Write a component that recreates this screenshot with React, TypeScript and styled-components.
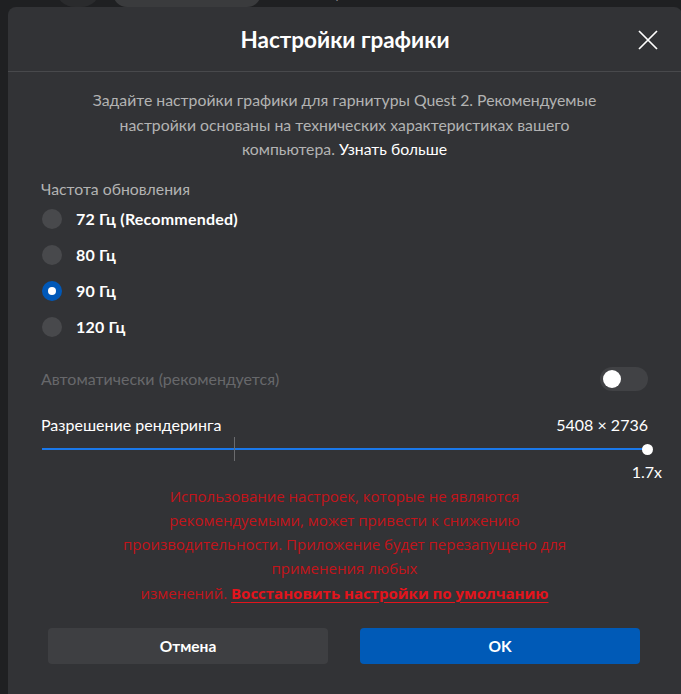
import React from "react";
import styled, { createGlobalStyle } from "styled-components";

const Global = createGlobalStyle`
  html, body { margin: 0; padding: 0; background: #1f2022; overflow: hidden; }
  body { font-family: "Segoe UI", "Lato", "Noto Sans", sans-serif; }
  * { box-sizing: border-box; }
`;

const Page = styled.div`
  width: 681px;
  height: 694px;
  overflow: hidden;
  background: #1f2022;
`;

const PeekStrip = styled.div`
  height: 7px;
  display: flex;
  align-items: flex-end;
  overflow: hidden;
  padding-left: 55px;
  gap: 12px;
`;

const PeekCircle = styled.div`
  width: 46px;
  height: 40px;
  border-radius: 0 0 20px 20px;
  background: #2a2b2d;
`;

const PeekCard = styled.div`
  width: 148px;
  height: 30px;
  border-radius: 0 0 14px 14px;
  background: #3a3b3d;
`;

const PeekText = styled.div`
  margin-left: 28px;
  font-size: 13px;
  line-height: 13px;
  color: #8a8a8a;
  transform: translateY(-6px);
`;

const Modal = styled.div`
  margin-left: 8px;
  width: 674px;
  height: 700px;
  background: #323336;
  border-radius: 8px;
  display: flex;
  flex-direction: column;
`;

const Header = styled.div`
  height: 65px;
  border-bottom: 1px solid #48494c;
  display: flex;
  align-items: center;
  justify-content: center;
  position: relative;
`;

const Title = styled.h1`
  margin: 0;
  font-size: 22.5px;
  font-weight: 700;
  color: #ffffff;
`;

const CloseButton = styled.button`
  position: absolute;
  right: 22px;
  top: 21px;
  width: 24px;
  height: 24px;
  padding: 0;
  border: none;
  background: transparent;
  display: flex;
  align-items: center;
  justify-content: center;
  cursor: pointer;
`;

const Body = styled.div`
  padding: 0 34px 0 33px;
  display: flex;
  flex-direction: column;
`;

const Description = styled.p`
  margin: 16px 0 0;
  text-align: center;
  font-size: 15.8px;
  line-height: 24.5px;
  color: #b3b3b3;
`;

const LearnMore = styled.a`
  color: #ffffff;
  text-decoration: none;
`;

const SectionLabel = styled.div`
  margin-top: 17px;
  font-size: 15.8px;
  line-height: 20px;
  color: #b3b3b3;
`;

const RadioList = styled.div`
  margin-top: 2px;
  display: flex;
  flex-direction: column;
`;

const RadioRow = styled.label`
  height: 36px;
  display: flex;
  align-items: center;
  gap: 14px;
  cursor: pointer;
`;

const RadioDot = styled.span<{ $checked: boolean }>`
  width: 20px;
  height: 20px;
  margin-left: 1px;
  border-radius: 50%;
  background: ${(p) => (p.$checked ? "#0058b8" : "#48494c")};
  display: flex;
  align-items: center;
  justify-content: center;
  &::after {
    content: "";
    width: 8px;
    height: 8px;
    border-radius: 50%;
    background: #ffffff;
    display: ${(p) => (p.$checked ? "block" : "none")};
  }
`;

const RadioText = styled.span`
  font-size: 16px;
  font-weight: 700;
  letter-spacing: 0.2px;
  color: #ffffff;
`;

const AutoRow = styled.div`
  margin-top: 22px;
  height: 24px;
  display: flex;
  align-items: center;
  justify-content: space-between;
`;

const DimLabel = styled.span`
  font-size: 16px;
  color: #67686b;
`;

const Toggle = styled.div`
  width: 48px;
  height: 24px;
  border-radius: 12px;
  background: #414245;
  display: flex;
  align-items: center;
  padding-left: 3px;
  &::after {
    content: "";
    width: 18px;
    height: 18px;
    border-radius: 50%;
    background: #ffffff;
  }
`;

const ResolutionRow = styled.div`
  margin-top: 24px;
  display: flex;
  justify-content: space-between;
  align-items: center;
  font-size: 16px;
  line-height: 20px;
  color: #ffffff;
`;

const SliderWrap = styled.div`
  margin-top: 1px;
  height: 26px;
  position: relative;
  display: flex;
  align-items: center;
  padding-left: 1px;
`;

const Track = styled.div`
  flex: 1;
  height: 2px;
  background: #1a78ea;
`;

const Tick = styled.div`
  position: absolute;
  left: 193px;
  top: 1px;
  width: 1px;
  height: 24px;
  background: #6a6b6e;
`;

const Thumb = styled.div`
  position: absolute;
  right: -5px;
  top: 8px;
  width: 11px;
  height: 11px;
  border-radius: 50%;
  background: #ffffff;
`;

const Scale = styled.div`
  margin-top: 0;
  margin-right: -14px;
  text-align: right;
  font-size: 16px;
  line-height: 20px;
  color: #ffffff;
`;

const Warning = styled.p`
  margin: 2px 0 0;
  text-align: center;
  font-family: "Open Sans", "Noto Sans", sans-serif;
  font-size: 15px;
  line-height: 24.3px;
  color: #c4141a;
`;

const ResetLink = styled.a`
  color: #e3141c;
  font-weight: 700;
  text-decoration: underline;
  text-underline-offset: 3px;
`;

const Buttons = styled.div`
  margin-top: 23px;
  padding: 0 8px 0 7px;
  display: grid;
  grid-template-columns: 1fr 1fr;
  gap: 32px;
`;

const Button = styled.button<{ $primary?: boolean }>`
  height: 36px;
  border: none;
  border-radius: 4px;
  background: ${(p) => (p.$primary ? "#005ab7" : "#3e3f42")};
  color: #ffffff;
  font-family: "Segoe UI", "Lato", "Noto Sans", sans-serif;
  font-size: 15.5px;
  font-weight: 700;
  cursor: pointer;
`;

const rates = ["72 Гц (Recommended)", "80 Гц", "90 Гц", "120 Гц"];

export default function App() {
  const selected = 2;
  return (
    <Page>
      <Global />
      <PeekStrip>
        <PeekCircle />
        <PeekCard />
        <PeekText>Аватары</PeekText>
      </PeekStrip>
      <Modal>
        <Header>
          <Title>Настройки графики</Title>
          <CloseButton aria-label="Закрыть">
            <svg width="22" height="22" viewBox="0 0 22 22">
              <path d="M2 2 L20 20 M20 2 L2 20" stroke="#ffffff" strokeWidth="1.7" fill="none" />
            </svg>
          </CloseButton>
        </Header>
        <Body>
          <Description>
            Задайте настройки графики для гарнитуры Quest 2. Рекомендуемые
            <br />
            настройки основаны на технических характеристиках вашего
            <br />
            компьютера. <LearnMore href="#">Узнать больше</LearnMore>
          </Description>
          <SectionLabel>Частота обновления</SectionLabel>
          <RadioList>
            {rates.map((r, i) => (
              <RadioRow key={r}>
                <RadioDot $checked={i === selected} />
                <RadioText>{r}</RadioText>
              </RadioRow>
            ))}
          </RadioList>
          <AutoRow>
            <DimLabel>Автоматически (рекомендуется)</DimLabel>
            <Toggle />
          </AutoRow>
          <ResolutionRow>
            <span>Разрешение рендеринга</span>
            <span>5408 × 2736</span>
          </ResolutionRow>
          <SliderWrap>
            <Track />
            <Tick />
            <Thumb />
          </SliderWrap>
          <Scale>1.7x</Scale>
          <Warning>
            Использование настроек, которые не являются
            <br />
            рекомендуемыми, может привести к снижению
            <br />
            производительности. Приложение будет перезапущено для
            <br />
            применения любых
            <br />
            изменений. <ResetLink href="#">Восстановить настройки по умолчанию</ResetLink>
          </Warning>
          <Buttons>
            <Button>Отмена</Button>
            <Button $primary>OK</Button>
          </Buttons>
        </Body>
      </Modal>
    </Page>
  );
}
